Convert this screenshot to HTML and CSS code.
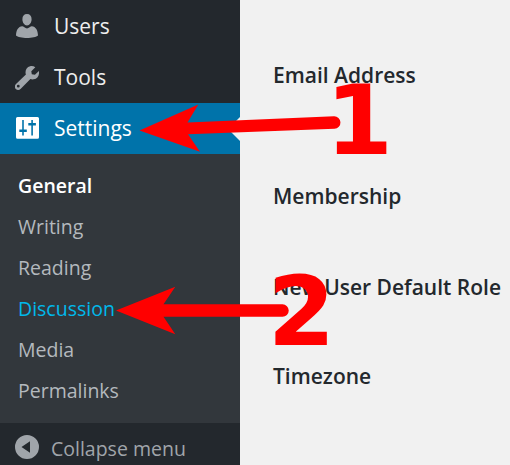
FILE: index.html
```html
<!DOCTYPE html>
<html lang="en">
<head>
<meta charset="utf-8">
<title>General Settings</title>
<link rel="stylesheet" href="styles.css">
</head>
<body>
<div class="screen">
  <nav class="sidebar">
    <a class="item first">
      <svg class="icon" viewBox="0 0 24 26"><path d="M12 1c3 0 4.600 2 4.600 5.200 0 3.300-2 6.200-4.600 6.200S7.400 9.500 7.400 6.200C7.400 3 9 1 12 1zM7.200 13.200c1.200 0 3 2.200 4.800 2.200s3.600-2.200 4.800-2.200c3.800.3 6.200 4 6.200 9.300C20 25.800 4 25.800 1 22.500c0-5.300 2.400-9 6.200-9.300z"/></svg>
      <span>Users</span>
    </a>
    <a class="item">
      <svg class="icon" viewBox="0 0 24 26"><path fill-rule="evenodd" d="M20.300 2.200l-4 4 .5 3.100 3.100.5 4-3.800c.8 4-1.300 7.700-5 8.300-1.300.3-2.500.1-3.500-.3l-9.600 9.800c-1.600 1.600-3.700 1.500-5 .2-1.400-1.400-1.300-3.500.2-4.900l9.900-9.600c-1.200-3.400.4-7.600 4.200-8.300 2-.4 3.700 0 5.200 1zM3.300 19.800a1.400 1.400 0 1 0 0 2.800 1.400 1.400 0 0 0 0-2.800z"/></svg>
      <span>Tools</span>
    </a>
    <a class="item current">
      <svg class="icon" viewBox="0 0 24 26"><path fill-rule="evenodd" d="M2.500 2h20q1.500 0 1.500 1.500v18.800q0 1.500-1.500 1.500h-20Q1 23.800 1 22.300V3.500Q1 2 2.500 2zM7.200 5v9.500H4.300V17h2.900v3.500h1.600V17h3v-2.500h-3V5zM16.300 5v3h-3v2.500h3v10h1.600v-10h3V8h-3V5z"/></svg>
      <span>Settings</span>
    </a>
    <div class="submenu">
      <a class="active">General</a>
      <a>Writing</a>
      <a>Reading</a>
      <a class="hover">Discussion</a>
      <a>Media</a>
      <a>Permalinks</a>
    </div>
    <a class="collapse">
      <svg class="icon" viewBox="0 0 24 26"><path fill-rule="evenodd" d="M12 1a12 12 0 1 1 0 24 12 12 0 0 1 0-24zM15 7.300L6.500 13l8.500 5.700z"/></svg>
      <span>Collapse menu</span>
    </a>
  </nav>
  <main class="content">
    <div class="field email">Email Address</div>
    <div class="field member">Membership</div>
    <div class="field role">New User Default Role</div>
    <div class="field">Timezone</div>
  </main>
  <svg class="notes" viewBox="0 0 510 465">
    <path d="M139.500 130.500L198.300 104.500 187.500 122.400 334 116.300a6.200 6.200 0 0 1 .5 12.400L188 134.200 200 151.700z"/>
    <path d="M116 310.500L175.300 286.700 163.500 304.300H282.500a6.250 6.250 0 0 1 0 12.500H163.500L175.300 334.300z"/>
    <text x="325.500" y="154">1</text>
    <text x="267.800" y="345">2</text>
  </svg>
</div>
</body>
</html>
```
FILE: styles.css
```css
body {
  margin: 0;
  font-family: "Open Sans", "Noto Sans", sans-serif;
}
.screen {
  position: relative;
  display: flex;
  width: 510px;
  height: 465px;
  overflow: hidden;
  background: #f1f1f1;
}
.sidebar {
  width: 240px;
  flex: none;
  background: #23282d;
}
.item {
  display: flex;
  align-items: center;
  gap: 12px;
  box-sizing: border-box;
  height: 51px;
  padding-left: 15px;
  font-size: 21px;
  line-height: 51px;
  color: #eee;
}
.first {
  height: 52px;
}
.icon {
  width: 24px;
  height: 26px;
  flex: none;
  fill: #a0a5aa;
}
.item .icon {
  margin-right: 3px;
}
.current {
  position: relative;
  background: #0073aa;
  color: #fff;
}
.current .icon {
  margin-bottom: 1px;
  fill: #fff;
}
.current::after {
  content: "";
  position: absolute;
  right: 0;
  top: 14px;
  border: 12px solid transparent;
  border-left-width: 0;
  border-right-color: #f1f1f1;
}
.submenu {
  box-sizing: border-box;
  height: 269px;
  padding: 11px 0 0 18px;
  background: #32373c;
  font-size: 19.5px;
  color: #b4b9be;
}
.submenu a {
  display: block;
  height: 41px;
  line-height: 41px;
}
.submenu .active {
  font-weight: 600;
  color: #fff;
}
.submenu .hover {
  color: #00b9eb;
}
.collapse {
  display: flex;
  align-items: center;
  gap: 12px;
  height: 51px;
  padding-left: 15px;
  font-size: 19.5px;
  color: #a0a5aa;
}
.collapse .icon {
  margin-bottom: 3px;
}
.content {
  padding: 60px 0 0 33px;
  font-size: 21px;
  font-weight: 600;
  line-height: 30px;
  color: #23282d;
  white-space: nowrap;
}
.email {
  margin-bottom: 91px;
}
.member {
  margin-bottom: 61px;
}
.role {
  margin-bottom: 59px;
}
.notes {
  position: absolute;
  inset: 0;
  width: 510px;
  height: 465px;
  fill: #f00;
  font: bold 97px "DejaVu Sans", sans-serif;
}
```
